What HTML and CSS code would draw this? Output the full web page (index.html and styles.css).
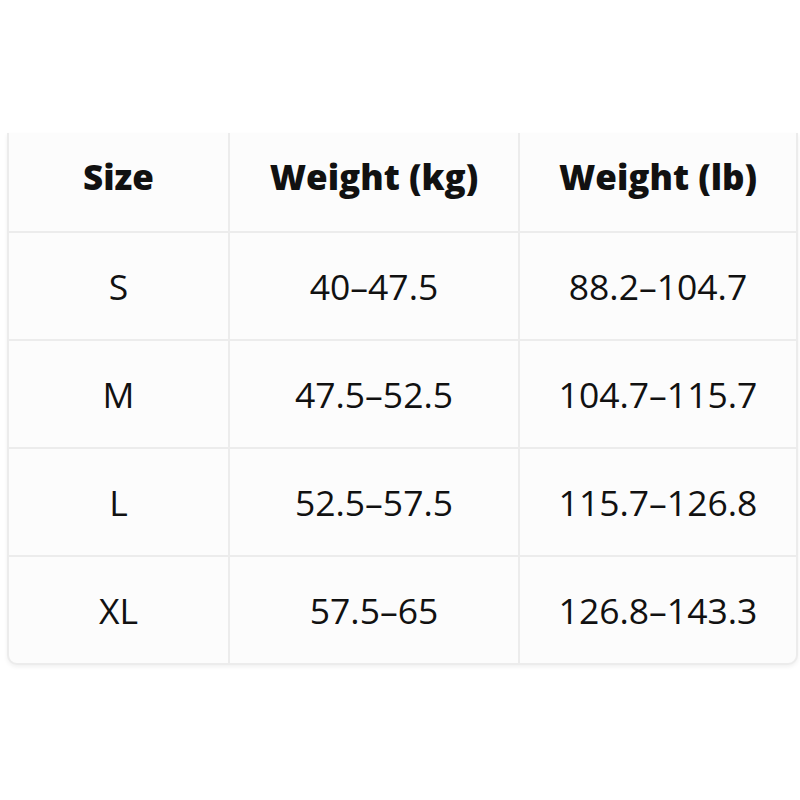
FILE: index.html
```html
<!DOCTYPE html>
<html lang="en">
<head>
<meta charset="utf-8">
<title>Size chart</title>
<link rel="stylesheet" href="styles.css">
</head>
<body>
<div class="page">
  <div class="card">
    <table class="chart">
      <colgroup>
        <col class="c1">
        <col class="c2">
        <col class="c3">
      </colgroup>
      <thead>
        <tr><th>Size</th><th>Weight (kg)</th><th>Weight (lb)</th></tr>
      </thead>
      <tbody>
        <tr><td>S</td><td>40–47.5</td><td>88.2–104.7</td></tr>
        <tr><td>M</td><td>47.5–52.5</td><td>104.7–115.7</td></tr>
        <tr><td>L</td><td>52.5–57.5</td><td>115.7–126.8</td></tr>
        <tr><td>XL</td><td>57.5–65</td><td>126.8–143.3</td></tr>
      </tbody>
    </table>
  </div>
</div>
</body>
</html>
```
FILE: styles.css
```css
html, body {
  margin: 0;
  padding: 0;
  background: #ffffff;
}
.page {
  padding: 133px 2px 0 7px;
  height: 800px;
  box-sizing: border-box;
  overflow: hidden;
}
.card {
  width: 791px;
  background: #fcfcfc;
  border: 2px solid #ececec;
  border-top: none;
  border-radius: 0 0 10px 10px;
  box-shadow: 0 2px 4px rgba(0,0,0,0.06);
  overflow: hidden;
  box-sizing: border-box;
}
.chart {
  width: 100%;
  border-collapse: collapse;
  table-layout: fixed;
  font-family: "Open Sans", "Noto Sans", sans-serif;
  color: #111111;
}
.c1 { width: 220px; }
.c2 { width: 290px; }
.c3 { width: auto; }
.chart th,
.chart td {
  text-align: center;
  padding: 0;
  border-left: 2px solid #ececec;
  border-bottom: 2px solid #ececec;
}
.chart th:first-child,
.chart td:first-child {
  border-left: none;
}
.chart tbody tr:last-child td {
  border-bottom: none;
}
.chart th {
  height: 87px;
  font-size: 35px;
  font-weight: 800;
  padding-bottom: 11px;
  letter-spacing: 0;
}
.chart td {
  height: 106px;
  font-size: 35.5px;
  font-weight: 400;
}
```
